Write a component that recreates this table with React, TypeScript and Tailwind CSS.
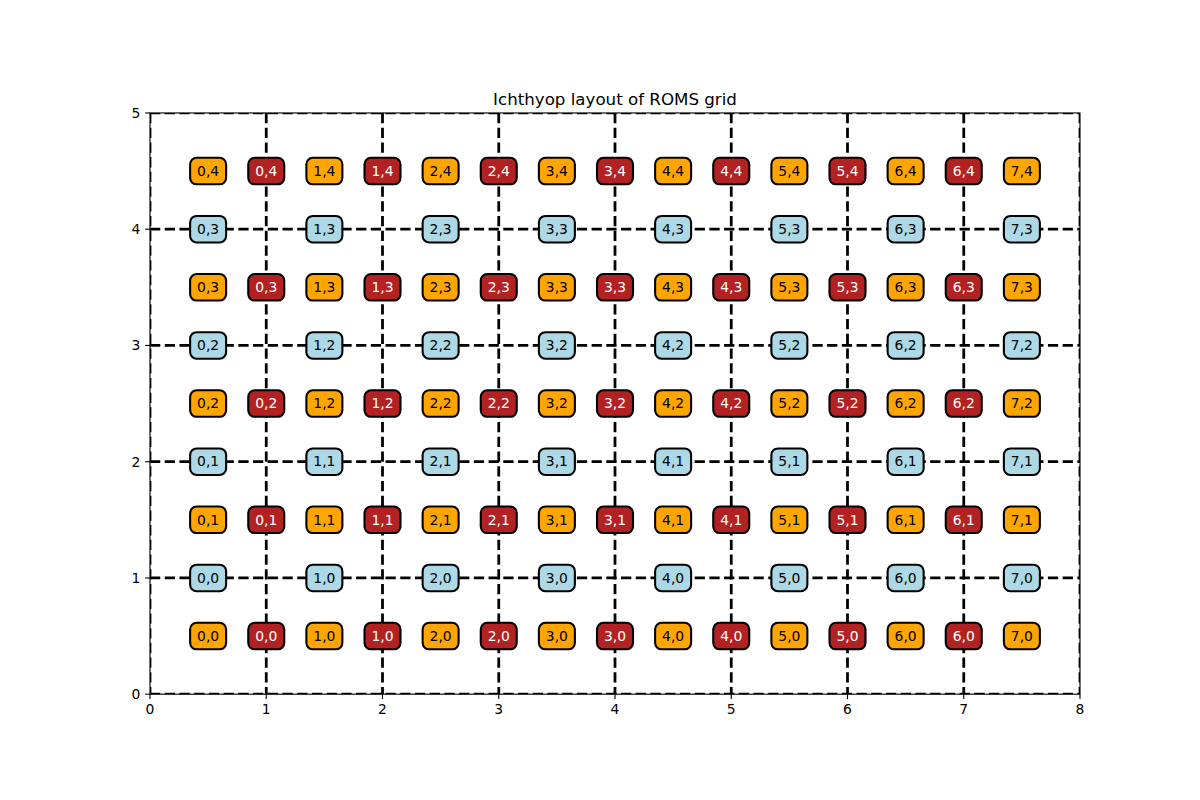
import React from "react";

// Matplotlib-style figure: data (0..8, 0..5) mapped onto a 930x581 axes box.
const LEFT = 150;
const RIGHT = 1080;
const TOP = 113.35;
const BOTTOM = 694.6;
const SX = (RIGHT - LEFT) / 8;
const SY = (BOTTOM - TOP) / 5;

const X = (x: number) => LEFT + x * SX;
const Y = (y: number) => BOTTOM - y * SY;

type Cell = { x: number; y: number; label: string; fill: string; text: string };

function buildCells(): Cell[] {
  const cells: Cell[] = [];
  // rho points (orange) and u points (red)
  for (let j = 0; j < 5; j++) {
    for (let i = 0; i < 8; i++) {
      cells.push({ x: i + 0.5, y: j + 0.5, label: `${i},${j}`, fill: "#FFA500", text: "#000" });
      if (i < 7) {
        cells.push({ x: i + 1, y: j + 0.5, label: `${i},${j}`, fill: "#B22222", text: "#fff" });
      }
    }
  }
  // v points (light blue)
  for (let j = 0; j < 4; j++) {
    for (let i = 0; i < 8; i++) {
      cells.push({ x: i + 0.5, y: j + 1, label: `${i},${j}`, fill: "#ADD8E6", text: "#000" });
    }
  }
  return cells;
}

const CELLS = buildCells();
const XTICKS = [0, 1, 2, 3, 4, 5, 6, 7, 8];
const YTICKS = [0, 1, 2, 3, 4, 5];

function Box({ cell }: { cell: Cell }) {
  const cx = X(cell.x);
  const cy = Y(cell.y);
  return (
    <g>
      <rect
        x={cx - 18}
        y={cy - 13.25}
        width={36}
        height={26.5}
        rx={6.5}
        fill={cell.fill}
        stroke="#000"
        strokeWidth={2.08}
      />
      <text x={cx} y={cy + 4.8} textAnchor="middle" fontSize={13.89} fill={cell.text}>
        {cell.label}
      </text>
    </g>
  );
}

export default function App() {
  return (
    <div className="w-[1200px] h-[800px] bg-white flex flex-col text-black font-['DejaVu_Sans','Liberation_Sans',sans-serif]">
      <div className="pt-[90px] pl-[150px] pr-[120px] text-center text-[16.67px] leading-[19.4px]">
        Ichthyop layout of ROMS grid
      </div>

      <svg width={1200} height={690.6} viewBox="0 109.4 1200 690.6" className="block overflow-visible">
        <defs>
          <clipPath id="axes">
            <rect x={LEFT} y={TOP} width={RIGHT - LEFT} height={BOTTOM - TOP} />
          </clipPath>
        </defs>

        {/* grid lines */}
        <g clipPath="url(#axes)" stroke="#000" strokeWidth={2.78} strokeDasharray="10.28 4.44" fill="none">
          {XTICKS.map((i) => (
            <path key={`v${i}`} d={`M ${X(i)} ${TOP} V ${BOTTOM}`} />
          ))}
          {YTICKS.map((j) => (
            <path key={`h${j}`} d={`M ${LEFT} ${Y(j)} H ${RIGHT}`} />
          ))}
        </g>

        {/* spines */}
        <rect
          x={LEFT}
          y={TOP}
          width={RIGHT - LEFT}
          height={BOTTOM - TOP}
          fill="none"
          stroke="#000"
          strokeWidth={1.11}
        />

        {/* ticks + labels */}
        <g stroke="#000" strokeWidth={1.11}>
          {XTICKS.map((i) => (
            <path key={`xt${i}`} d={`M ${X(i)} ${BOTTOM} V ${BOTTOM + 4.86}`} />
          ))}
          {YTICKS.map((j) => (
            <path key={`yt${j}`} d={`M ${LEFT} ${Y(j)} H ${LEFT - 4.86}`} />
          ))}
        </g>
        <g fontSize={13.89} fill="#000">
          {XTICKS.map((i) => (
            <text key={`xl${i}`} x={X(i)} y={714.6} textAnchor="middle">
              {i}
            </text>
          ))}
          {YTICKS.map((j) => (
            <text key={`yl${j}`} x={140.3} y={Y(j) + 5} textAnchor="end">
              {j}
            </text>
          ))}
        </g>

        {/* grid points */}
        {CELLS.map((c) => (
          <Box key={`${c.fill}-${c.label}-${c.x}-${c.y}`} cell={c} />
        ))}
      </svg>
    </div>
  );
}
